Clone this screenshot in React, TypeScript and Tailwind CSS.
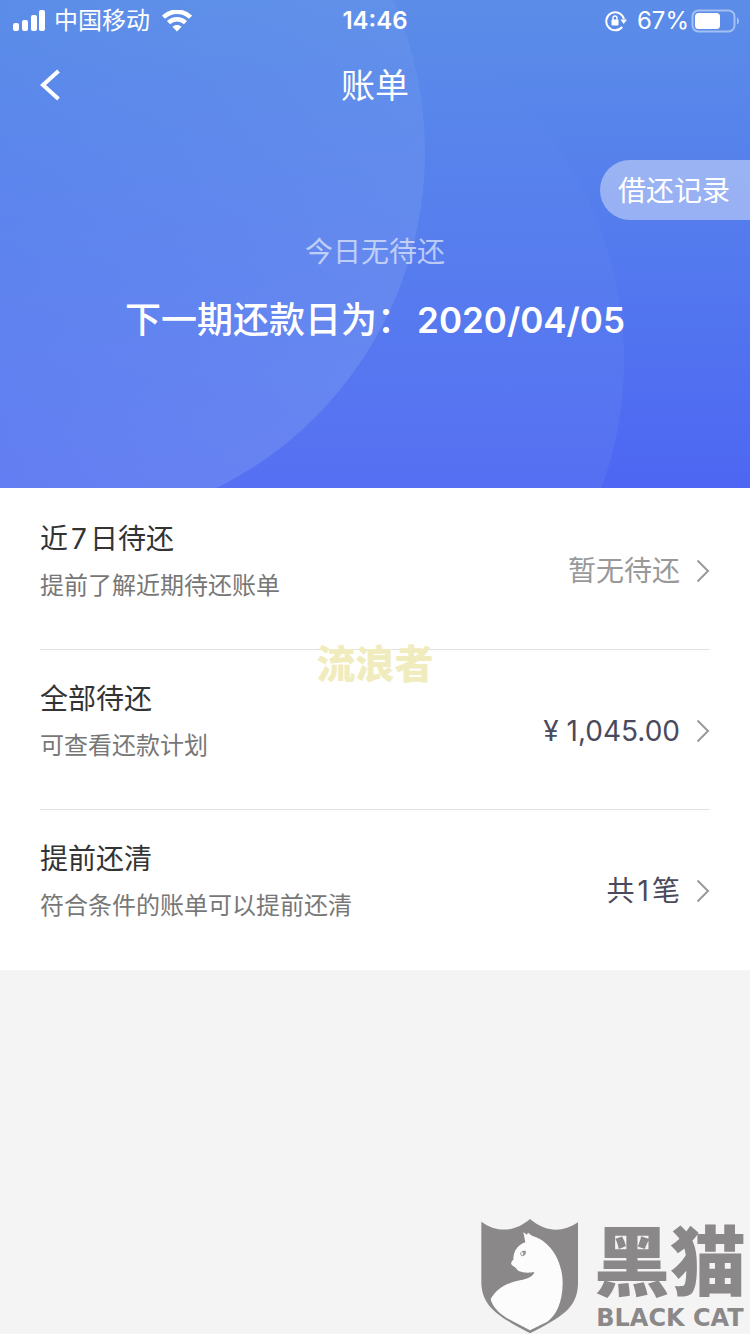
import React from "react";

const rows = [
  { title: "近7日待还", desc: "提前了解近期待还账单", value: "暂无待还", muted: true },
  { title: "全部待还", desc: "可查看还款计划", value: "¥ 1,045.00", muted: false },
  { title: "提前还清", desc: "符合条件的账单可以提前还清", value: "共1笔", muted: false },
];

// Adds a little air around a digit that sits between two Chinese characters
function MixedText({ text }: { text: string }) {
  const match = text.match(/^([^\d\s¥]+)(\d+)(.+)$/);
  if (!match) return <>{text}</>;
  return (
    <>
      {match[1]}
      <span className="mx-[3px]">{match[2]}</span>
      {match[3]}
    </>
  );
}

function StatusBar() {
  return (
    <div className="grid h-[42px] grid-cols-3 items-center px-3 text-2xl text-white">
      <div className="flex items-center gap-2">
        <svg width="34" height="22" viewBox="0 0 34 22" fill="currentColor">
          <rect x="1" y="13" width="6" height="8" rx="2" />
          <rect x="10" y="10" width="6" height="11" rx="2" />
          <rect x="19" y="5" width="6" height="16" rx="2" />
          <rect x="27" y="0" width="6" height="21" rx="2" />
        </svg>
        <span className="whitespace-nowrap">中国移动</span>
        <svg className="ml-1" width="30" height="22" viewBox="0 0 30 22" fill="none" stroke="currentColor" strokeWidth="4.5">
          <path d="M1.5 7.2C9.2-.2 20.8-.2 28.5 7.2" />
          <path d="M6.5 12.7c4.9-4.7 12.1-4.7 17 0" />
          <path d="M15 21.5l-4.6-4.7c2.5-2.3 6.7-2.3 9.2 0z" fill="currentColor" stroke="none" />
        </svg>
      </div>
      <span className="text-center font-semibold">14:46</span>
      <div className="flex items-center justify-end">
        <svg width="22" height="22" viewBox="0 0 22 22" fill="none" stroke="currentColor" strokeWidth="2">
          <path d="M17.2 17A9 9 0 1 1 19 9" />
          <path d="M15.5 9.5h6.5l-3.3 4.5z" fill="currentColor" stroke="none" />
          <rect x="6.500" y="9.500" width="7" height="6" rx="1" fill="currentColor" stroke="none" />
          <path d="M8 10V8a2 2 0 0 1 4 0v2" strokeWidth="1.4" />
        </svg>
        <span className="ml-2.5 mr-0.5">67%</span>
        <svg className="-mr-0.5 shrink-0" width="49" height="24" viewBox="0 0 49 24" fill="none">
          <rect x="1.5" y="1.5" width="42" height="21" rx="6" stroke="#fff" strokeOpacity=".45" strokeWidth="2" />
          <rect x="4" y="4" width="25" height="16" rx="3.5" fill="#fff" />
          <path d="M46 8.500c2.500 1 2.500 6 0 7z" fill="#fff" fillOpacity=".5" />
        </svg>
      </div>
    </div>
  );
}

function HeaderCircles() {
  return (
    <svg
      className="absolute inset-0 h-full w-full"
      viewBox="0 0 750 488"
      preserveAspectRatio="xMidYMid slice"
      aria-hidden="true"
    >
      <defs>
        <linearGradient id="circleA" x1=".3" y1=".2" x2=".8" y2="1">
          <stop offset=".15" stopColor="#8fb0f0" stopOpacity="0" />
          <stop offset="1" stopColor="#8fb0f0" stopOpacity=".32" />
        </linearGradient>
        <linearGradient id="circleB" x1="0" y1="0" x2="0" y2="1">
          <stop offset=".1" stopColor="#8fb0f0" stopOpacity="0" />
          <stop offset=".6" stopColor="#8fb0f0" stopOpacity=".12" />
        </linearGradient>
      </defs>
      <circle cx="50" cy="152" r="375" fill="url(#circleA)" />
      <circle cx="250" cy="360" r="374" fill="url(#circleB)" />
    </svg>
  );
}

function Chevron() {
  return (
    <svg width="14" height="24" viewBox="0 0 14 24" fill="none" stroke="#999" strokeWidth="2">
      <path d="M1.5 1.5L12 12 1.5 22.5" />
    </svg>
  );
}

function BlackCatMark() {
  return (
    <div className="flex items-end text-[#8b8889]">
      <svg width="120" height="124" viewBox="0 0 360 372" aria-hidden="true">
        <path
          d="M34 35C80 68 132 68 180 27C228 68 278 68 324 37V222C322 296 272 322 180 370C88 320 36 292 34 218Z"
          fill="currentColor"
        />
        <path
          d="M160 67L171 74L174 68L186 77C238 92 278 148 278 220C278 276 258 318 232 335L180 361L110 324C84 308 67 288 62 268C78 236 112 218 150 211C174 206 189 200 193 186C176 189 160 189 148 184C142 182 139 173 126 166C121 160 124 154 130 149C130 122 144 104 166 97Z"
          fill="#fcfcfc"
        />
        <path d="M151 129c3-6 9-8 16-6c2 8-2 14-9 16c-5-1-7-5-7-10z" fill="currentColor" />
        <path d="M154 124l9 4l-3 9l-6-2z" fill="#fcfcfc" />
        <path d="M158 125c3 4 3 8 1 12" fill="none" stroke="currentColor" strokeWidth="3" />
      </svg>
      <div className="flex w-40 flex-col items-center gap-1 pb-1">
        <span className="whitespace-nowrap text-[76px] font-black leading-[80px]">黑猫</span>
        <span className="whitespace-nowrap font-['DejaVu_Sans',sans-serif] text-2xl font-bold leading-6">
          BLACK CAT
        </span>
      </div>
    </div>
  );
}

export default function App() {
  return (
    <div className="flex min-h-screen flex-col overflow-x-hidden bg-[#f4f4f4] font-['Inter','Noto_Sans_CJK_SC',sans-serif]">
      <header className="relative h-[488px] overflow-hidden bg-linear-to-b from-[#5b8de8] to-[#4e66f3] text-white">
        <HeaderCircles />
        <div className="relative">
          <StatusBar />
          <div className="grid h-[86px] grid-cols-3 items-center px-10">
            <button type="button" aria-label="返回" className="w-fit">
              <svg width="20" height="32" viewBox="0 0 20 32" fill="none" stroke="currentColor" strokeWidth="4">
                <path d="M18.5 2L3 16l15.5 14" />
              </svg>
            </button>
            <h1 className="text-center text-[34px]">账单</h1>
          </div>
          <div className="flex justify-end pt-8">
            <a href="#records" className="flex h-15 items-center rounded-l-full bg-white/40 pl-[18px] pr-5 pt-0.5 text-[28px]">
              借还记录
            </a>
          </div>
          <p className="mt-3 text-center text-[28px] leading-10 text-white/60">今日无待还</p>
          <p className="mt-6 text-center text-4xl font-medium leading-12">
            下一期还款日为：<span className="ml-1 text-[35px] font-semibold">2020/04/05</span>
          </p>
        </div>
      </header>

      <main className="relative bg-white px-10 pt-0.5">
        {rows.map((row) => (
          <button
            key={row.title}
            type="button"
            className="flex h-40 w-full justify-between border-b border-[#e2e2e2] pt-[29px] text-left last-of-type:border-white"
          >
            <span className="flex flex-col gap-3">
              <span className="text-[28px] leading-10 text-[#333]">
                <MixedText text={row.title} />
              </span>
              <span className="text-2xl leading-[30px] text-[#777]">{row.desc}</span>
            </span>
            <span className="flex h-[103px] items-center gap-4">
              <span className={row.muted ? "text-[28px] text-[#999]" : "text-[28px] text-[#4a4a5c]"}>
                <MixedText text={row.value} />
              </span>
              <Chevron />
            </span>
          </button>
        ))}
        <span className="absolute left-1/2 top-[151px] -translate-x-1/2 whitespace-nowrap text-[39px] font-black leading-[50px] text-[#f1ecbe]">
          流浪者
        </span>
      </main>

      <footer className="mt-auto flex justify-end">
        <BlackCatMark />
      </footer>
    </div>
  );
}
